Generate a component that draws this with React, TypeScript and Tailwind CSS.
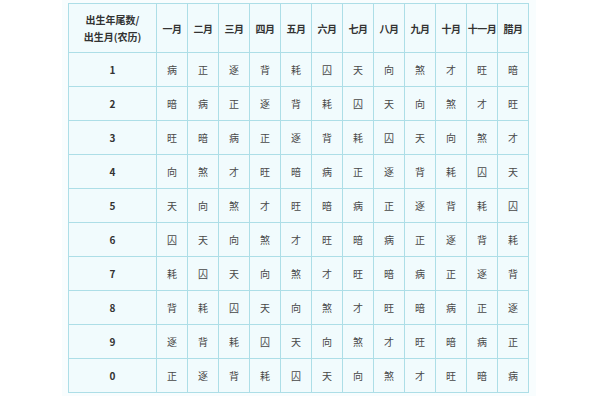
import { Fragment } from "react";

const MONTHS = ["一月", "二月", "三月", "四月", "五月", "六月", "七月", "八月", "九月", "十月", "十一月", "腊月"];

const ROWS: [string, string[]][] = [
  ["1", ["病", "正", "逐", "背", "耗", "囚", "天", "向", "煞", "才", "旺", "暗"]],
  ["2", ["暗", "病", "正", "逐", "背", "耗", "囚", "天", "向", "煞", "才", "旺"]],
  ["3", ["旺", "暗", "病", "正", "逐", "背", "耗", "囚", "天", "向", "煞", "才"]],
  ["4", ["向", "煞", "才", "旺", "暗", "病", "正", "逐", "背", "耗", "囚", "天"]],
  ["5", ["天", "向", "煞", "才", "旺", "暗", "病", "正", "逐", "背", "耗", "囚"]],
  ["6", ["囚", "天", "向", "煞", "才", "旺", "暗", "病", "正", "逐", "背", "耗"]],
  ["7", ["耗", "囚", "天", "向", "煞", "才", "旺", "暗", "病", "正", "逐", "背"]],
  ["8", ["背", "耗", "囚", "天", "向", "煞", "才", "旺", "暗", "病", "正", "逐"]],
  ["9", ["逐", "背", "耗", "囚", "天", "向", "煞", "才", "旺", "暗", "病", "正"]],
  ["0", ["正", "逐", "背", "耗", "囚", "天", "向", "煞", "才", "旺", "暗", "病"]],
];

export default function App() {
  return (
    <div
      className="w-[600px] h-[400px] bg-white flex justify-center"
      style={{ fontFamily: '"Noto Sans CJK SC", "Noto Sans", sans-serif' }}
    >
      <div className="ml-[-2px] w-[474px] h-[396px] bg-[#f8fdfe] pt-[3px] px-[6px]">
        <div className="grid grid-cols-[87px_repeat(12,30px)] grid-rows-[48px_repeat(10,33px)] gap-px p-px bg-[#addee7] w-[461px]">
          <div className="bg-[#f1fbfd] flex flex-col items-center justify-center text-[10px] leading-[17px] font-bold text-[#333]">
            <span>出生年尾数/</span>
            <span>出生月(农历)</span>
          </div>
          {MONTHS.map(m => (
            <div
              key={m}
              className="bg-[#f1fbfd] flex items-center justify-center text-[10px] font-bold text-[#333] whitespace-nowrap tracking-[-0.5px]"
            >
              {m}
            </div>
          ))}
          {ROWS.map(([label, cells]) => (
            <Fragment key={label}>
              <div className="bg-[#f1fbfd] flex items-center justify-center text-[10px] font-bold text-[#333]">
                {label}
              </div>
              {cells.map((c, i) => (
                <div key={i} className="bg-[#f1fbfd] flex items-center justify-center text-[10px] text-[#484848]">
                  {c}
                </div>
              ))}
            </Fragment>
          ))}
        </div>
      </div>
    </div>
  );
}
